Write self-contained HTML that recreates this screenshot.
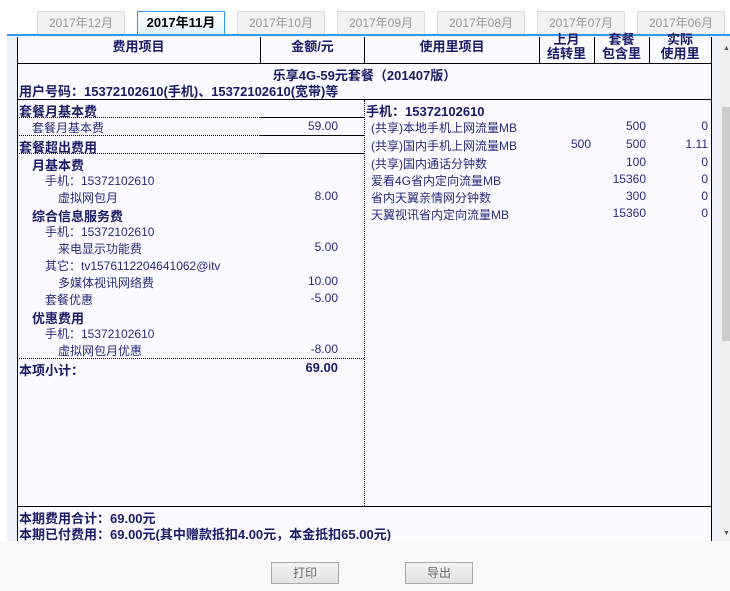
<!DOCTYPE html><html><head><meta charset="utf-8"><style>
*{margin:0;padding:0;box-sizing:border-box}
body{width:730px;height:591px;background:#fff;position:relative;overflow:hidden;font-family:"Liberation Sans","Noto Sans CJK SC",sans-serif;font-size:12px;color:#2a2a7a}
.a{position:absolute;white-space:nowrap}
.tab{position:absolute;top:11px;height:23px;width:88px;background:#f2f2f2;border:1px solid #ddd;border-bottom:none;color:#999;text-align:center;line-height:22px;font-size:12px}
.b{font-weight:bold;color:#1a1a66;font-size:13px}
.r{text-align:right}
.h{position:absolute;top:37px;height:26px;font-weight:bold;color:#1a1a66;font-size:13px;text-align:center;line-height:20px}
.h2{position:absolute;top:33px;font-weight:bold;color:#1a1a66;font-size:13px;text-align:center;line-height:14px}
.dl{position:absolute;height:0;border-top:1px dotted #000}
.sl{position:absolute;height:0;border-top:1px solid #000}
</style></head><body>
<div class="tab" style="left:37px">2017年12月</div>
<div class="tab" style="left:137px;background:linear-gradient(#fff,#dff3fb);border:1px solid #3399ee;border-bottom:none;color:#000;font-weight:bold;font-size:13px;height:24px">2017年11月</div>
<div class="tab" style="left:237px">2017年10月</div>
<div class="tab" style="left:337px">2017年09月</div>
<div class="tab" style="left:437px">2017年08月</div>
<div class="tab" style="left:537px">2017年07月</div>
<div class="tab" style="left:637px">2017年06月</div>
<div class="a" style="left:7px;top:34px;width:723px;height:2px;background:#3399ee"></div>
<div class="a" style="left:7px;top:36px;width:713px;height:505px;background:#eef0fa"></div>
<div class="a" style="left:17px;top:37px;width:695px;height:504px;background:#fbfbff;border-left:1px solid #000;border-right:1px solid #000"></div>
<div class="a" style="left:720px;top:36px;width:10px;height:505px;background:#f0f0f0"></div>
<div class="a" style="left:722px;top:107px;width:8px;height:234px;background:#cdcdcd"></div>
<div class="a" style="left:723px;top:45px;font-size:7px;color:#555">▲</div>
<div class="a" style="left:723px;top:530px;font-size:7px;color:#555">▼</div>
<!-- header -->
<div class="h" style="left:17px;width:243px">费用项目</div>
<div class="h" style="left:260px;width:104px;border-left:1px solid #000">金额/元</div>
<div class="h" style="left:364px;width:175px;border-left:1px solid #000">使用里项目</div>
<div class="a" style="left:539px;top:37px;height:26px;border-left:1px solid #000"></div>
<div class="a" style="left:594px;top:37px;height:26px;border-left:1px solid #000"></div>
<div class="a" style="left:649px;top:37px;height:26px;border-left:1px solid #000"></div>
<div class="h2" style="left:539px;width:55px">上月<br>结转里</div>
<div class="h2" style="left:594px;width:55px">套餐<br>包含里</div>
<div class="h2" style="left:649px;width:62px">实际<br>使用里</div>
<div class="sl" style="left:17px;top:63px;width:695px"></div>
<div class="a b" style="left:17px;top:65px;width:695px;text-align:center">乐享4G-59元套餐（201407版）</div>
<div class="a b" style="left:19px;top:81px">用户号码：15372102610(手机)、15372102610(宽带)等</div>
<div class="sl" style="left:17px;top:99px;width:695px"></div>
<div class="a" style="left:364px;top:100px;height:406px;border-left:1px dotted #000"></div>
<!-- left rows -->
<div class="a b" style="left:19px;top:101px">套餐月基本费</div>
<div class="dl" style="left:17px;top:117px;width:243px"></div><div class="sl" style="left:260px;top:117px;width:104px"></div>
<div class="a" style="left:32px;top:119px">套餐月基本费</div><div class="a r" style="left:260px;width:78px;top:119px">59.00</div>
<div class="dl" style="left:17px;top:135px;width:243px"></div><div class="sl" style="left:260px;top:135px;width:104px"></div>
<div class="a b" style="left:19px;top:137px">套餐超出费用</div>
<div class="dl" style="left:17px;top:153px;width:243px"></div><div class="sl" style="left:260px;top:153px;width:104px"></div>
<div class="a b" style="left:32px;top:155px">月基本费</div>
<div class="a" style="left:45px;top:172px">手机：15372102610</div>
<div class="a" style="left:58px;top:189px">虚拟网包月</div><div class="a r" style="left:260px;width:78px;top:189px">8.00</div>
<div class="a b" style="left:32px;top:206px">综合信息服务费</div>
<div class="a" style="left:45px;top:223px">手机：15372102610</div>
<div class="a" style="left:58px;top:240px">来电显示功能费</div><div class="a r" style="left:260px;width:78px;top:240px">5.00</div>
<div class="a" style="left:45px;top:257px">其它：tv1576112204641062@itv</div>
<div class="a" style="left:58px;top:274px">多媒体视讯网络费</div><div class="a r" style="left:260px;width:78px;top:274px">10.00</div>
<div class="a" style="left:45px;top:291px">套餐优惠</div><div class="a r" style="left:260px;width:78px;top:291px">-5.00</div>
<div class="a b" style="left:32px;top:308px">优惠费用</div>
<div class="a" style="left:45px;top:325px">手机：15372102610</div>
<div class="a" style="left:58px;top:342px">虚拟网包月优惠</div><div class="a r" style="left:260px;width:78px;top:342px">-8.00</div>
<div class="dl" style="left:17px;top:358px;width:347px"></div>
<div class="a b" style="left:19px;top:360px">本项小计：</div><div class="a b r" style="left:260px;width:78px;top:360px">69.00</div>
<!-- right rows -->
<div class="a b" style="left:366px;top:101px">手机：15372102610</div>
<div class="a" style="left:371px;top:119px">(共享)本地手机上网流量MB</div><div class="a r" style="left:594px;width:52px;top:119px">500</div><div class="a r" style="left:649px;width:59px;top:119px">0</div>
<div class="a" style="left:371px;top:137px">(共享)国内手机上网流量MB</div><div class="a r" style="left:539px;width:52px;top:137px">500</div><div class="a r" style="left:594px;width:52px;top:137px">500</div><div class="a r" style="left:649px;width:59px;top:137px">1.11</div>
<div class="a" style="left:371px;top:155px">(共享)国内通话分钟数</div><div class="a r" style="left:594px;width:52px;top:155px">100</div><div class="a r" style="left:649px;width:59px;top:155px">0</div>
<div class="a" style="left:371px;top:172px">爱看4G省内定向流量MB</div><div class="a r" style="left:594px;width:52px;top:172px">15360</div><div class="a r" style="left:649px;width:59px;top:172px">0</div>
<div class="a" style="left:371px;top:189px">省内天翼亲情网分钟数</div><div class="a r" style="left:594px;width:52px;top:189px">300</div><div class="a r" style="left:649px;width:59px;top:189px">0</div>
<div class="a" style="left:371px;top:206px">天翼视讯省内定向流量MB</div><div class="a r" style="left:594px;width:52px;top:206px">15360</div><div class="a r" style="left:649px;width:59px;top:206px">0</div>
<!-- totals -->
<div class="sl" style="left:17px;top:506px;width:695px"></div>
<div class="a b" style="left:19px;top:508px">本期费用合计：69.00元</div>
<div class="a b" style="left:19px;top:524px">本期已付费用：69.00元(其中赠款抵扣4.00元，本金抵扣65.00元)</div>
<!-- bottom -->
<div class="a" style="left:0;top:541px;width:730px;height:50px;background:#f9f9f9"></div>
<div class="a" style="left:271px;top:562px;width:68px;height:22px;border:1px solid #aaa;background:linear-gradient(#f4f4f4,#e2e2e2);color:#666;text-align:center;line-height:20px">打印</div>
<div class="a" style="left:405px;top:562px;width:68px;height:22px;border:1px solid #aaa;background:linear-gradient(#f4f4f4,#e2e2e2);color:#666;text-align:center;line-height:20px">导出</div>
</body></html>
